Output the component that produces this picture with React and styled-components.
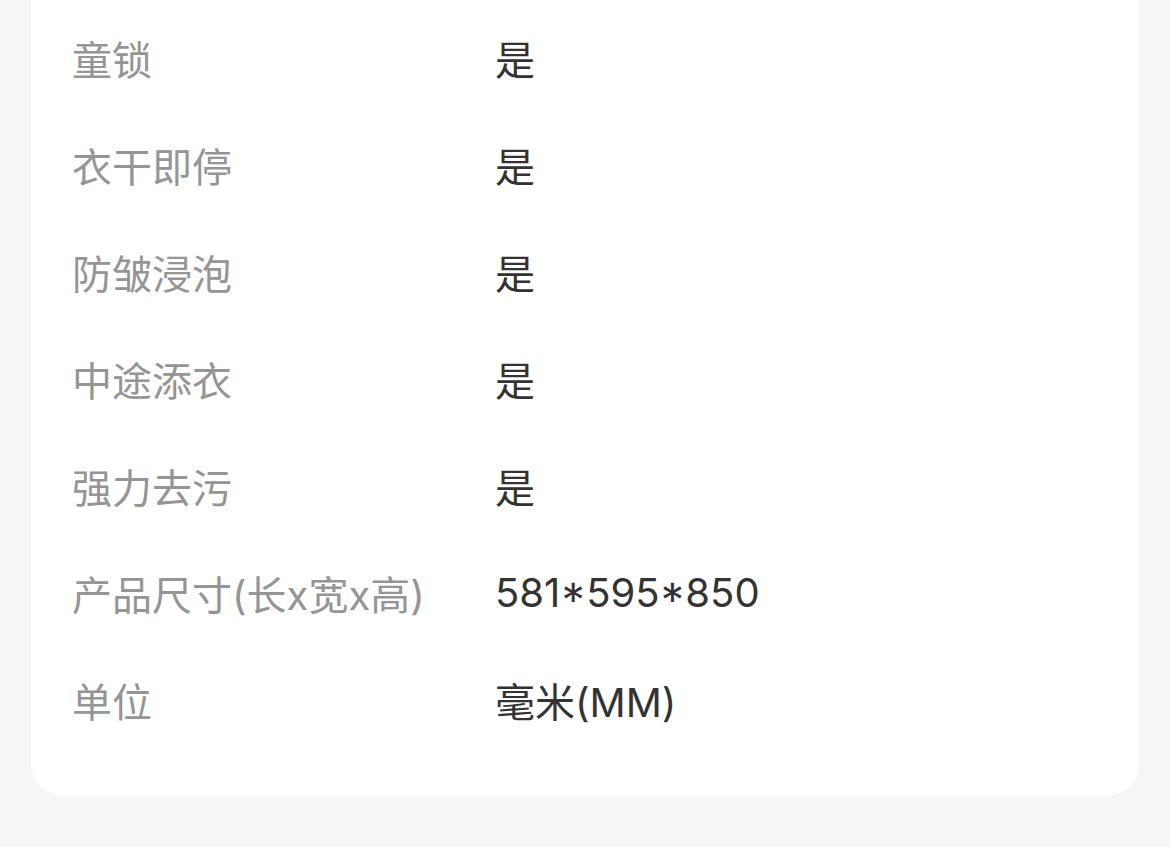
import styled, { createGlobalStyle } from 'styled-components';

const GlobalStyle = createGlobalStyle`
  html, body {
    margin: 0;
    padding: 0;
    background: #f5f6f8;
  }
  body {
    font-family: Inter, "Noto Sans CJK SC", sans-serif;
  }
`;

const Page = styled.div`
  width: 1170px;
  height: 847px;
  padding: 0 31px;
  box-sizing: border-box;
  background: #f5f6f8;
  overflow: hidden;
`;

const Card = styled.div`
  background: #ffffff;
  border-radius: 0 0 30px 30px;
  padding: 4px 41px 42px;
`;

const Row = styled.div`
  display: grid;
  grid-template-columns: 423px 1fr;
  align-items: center;
  height: 107px;
  font-size: 40px;
`;

const Label = styled.div`
  color: #959595;
`;

const Value = styled.div`
  color: #333333;
`;

const specs = [
  ['童锁', '是'],
  ['衣干即停', '是'],
  ['防皱浸泡', '是'],
  ['中途添衣', '是'],
  ['强力去污', '是'],
  ['产品尺寸(长x宽x高)', '581*595*850'],
  ['单位', '毫米(MM)'],
];

export default function App() {
  return (
    <Page>
      <GlobalStyle />
      <Card>
        {specs.map(([label, value]) => (
          <Row key={label}>
            <Label>{label}</Label>
            <Value>{value}</Value>
          </Row>
        ))}
      </Card>
    </Page>
  );
}
